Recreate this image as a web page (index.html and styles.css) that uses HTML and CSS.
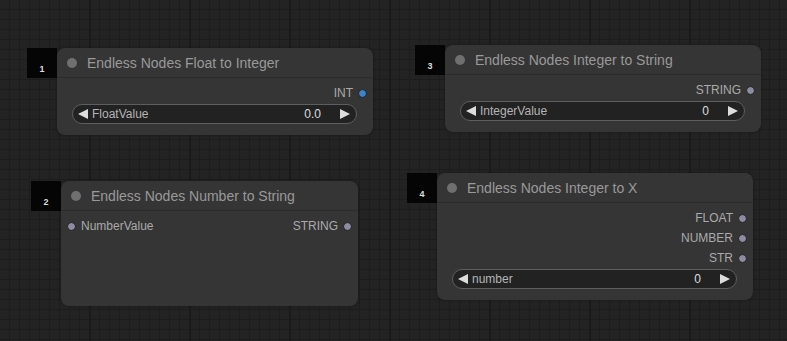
FILE: index.html
```html
<!DOCTYPE html>
<html lang="en">
  <head>
    <meta charset="UTF-8" />
    <meta name="viewport" content="width=device-width, initial-scale=1.0" />
    <title>Endless Nodes</title>
    <link rel="stylesheet" href="styles.css">
  </head>
  <body>
    <div class="canvas">

      <!-- Node 1 -->
      <div class="node node-1">
        <div class="badge">1</div>
        <div class="title"><span class="title-dot"></span>Endless Nodes Float to Integer</div>
        <div class="body">
          <div class="slot">
            <span class="out">INT <i class="dot dot-int"></i></span>
          </div>
          <div class="widget">
            <span class="arrow left"></span>
            <span class="w-label">FloatValue</span>
            <span class="w-value">0.0</span>
            <span class="arrow right"></span>
          </div>
        </div>
      </div>

      <!-- Node 3 -->
      <div class="node node-3">
        <div class="badge">3</div>
        <div class="title"><span class="title-dot"></span>Endless Nodes Integer to String</div>
        <div class="body">
          <div class="slot">
            <span class="out">STRING <i class="dot"></i></span>
          </div>
          <div class="widget">
            <span class="arrow left"></span>
            <span class="w-label">IntegerValue</span>
            <span class="w-value">0</span>
            <span class="arrow right"></span>
          </div>
        </div>
      </div>

      <!-- Node 2 -->
      <div class="node node-2">
        <div class="badge">2</div>
        <div class="title"><span class="title-dot"></span>Endless Nodes Number to String</div>
        <div class="body">
          <div class="slot">
            <span class="in"><i class="dot"></i> NumberValue</span>
            <span class="out">STRING <i class="dot"></i></span>
          </div>
        </div>
      </div>

      <!-- Node 4 -->
      <div class="node node-4">
        <div class="badge">4</div>
        <div class="title"><span class="title-dot"></span>Endless Nodes Integer to X</div>
        <div class="body">
          <div class="slot">
            <span class="out">FLOAT <i class="dot"></i></span>
          </div>
          <div class="slot">
            <span class="out">NUMBER <i class="dot"></i></span>
          </div>
          <div class="slot">
            <span class="out">STR <i class="dot"></i></span>
          </div>
          <div class="widget">
            <span class="arrow left"></span>
            <span class="w-label">number</span>
            <span class="w-value">0</span>
            <span class="arrow right"></span>
          </div>
        </div>
      </div>

    </div>
  </body>
</html>
```

FILE: styles.css
```css
body {
  margin: 0;
  padding: 0;
  font-family: "Liberation Sans", Arial, sans-serif;
  background-color: #222;
  overflow: hidden;
}

/* grid: thin lines every 10px, a heavier vertical one every 100px */
.canvas {
  position: relative;
  width: 787px;
  height: 341px;
  background-color: #232323;
  background-image:
    linear-gradient(to right, #1b1b1b 2px, transparent 2px),
    linear-gradient(to right, #1d1d1d 1px, transparent 1px),
    linear-gradient(to bottom, #1d1d1d 1px, transparent 1px);
  background-size: 100px 100px, 10px 10px, 10px 10px;
  background-position: 89px 0, 9px 0, 0 9px;
}

.node {
  position: absolute;
  width: 316px;
  background-color: #353535;
  border-radius: 8px;
  box-shadow: 0 0 3px rgba(0, 0, 0, 0.35);
}

.node-1 {
  left: 57px;
  top: 48px;
}

.node-3 {
  left: 445px;
  top: 45px;
}

.node-2 {
  left: 61px;
  top: 181px;
  width: 297px;
  height: 125px;
}

.node-4 {
  left: 437px;
  top: 173px;
}

.badge {
  position: absolute;
  left: -30px;
  top: 0;
  width: 30px;
  height: 30px;
  background-color: #050505;
  color: #ddd;
  font-size: 9px;
  font-weight: bold;
  text-align: center;
  line-height: 12px;
  padding-top: 15px;
  box-sizing: border-box;
}

.title {
  height: 29px;
  border-bottom: 1px solid #2c2c2c;
  display: flex;
  align-items: center;
  padding-left: 10px;
  color: #999;
  font-size: 14px;
}

.title-dot {
  width: 10px;
  height: 10px;
  border-radius: 50%;
  background-color: #6f6f6f;
  margin-right: 10px;
}

.body {
  padding: 5px 0 11px;
}

.slot {
  height: 20px;
  display: flex;
  align-items: center;
  justify-content: flex-end;
  font-size: 12px;
  color: #aaa;
}

.slot .in {
  display: flex;
  align-items: center;
  margin-right: auto;
  padding-left: 6px;
}

.slot .out {
  display: flex;
  align-items: center;
  padding-right: 6px;
}

.dot {
  display: inline-block;
  width: 7px;
  height: 7px;
  border-radius: 50%;
  background-color: #8e8ca3;
  border: 1px solid #1e1e1e;
}

.slot .in .dot {
  margin-right: 5px;
}

.slot .out .dot {
  margin-left: 5px;
}

.dot-int {
  background-color: #3d83c6;
}

.widget {
  height: 20px;
  margin: 1px 16px 0 15px;
  border: 1px solid #5e5e5e;
  border-radius: 10px;
  background-color: #222;
  box-sizing: border-box;
  display: flex;
  align-items: center;
  font-size: 12px;
  padding: 0 6px 0 5px;
}

.w-label {
  color: #b4b4b4;
  margin-left: 4px;
  flex: 1;
}

.w-value {
  color: #ddd;
  margin-right: 19px;
}

.arrow {
  width: 0;
  height: 0;
  border-top: 5px solid transparent;
  border-bottom: 5px solid transparent;
}

.arrow.left {
  border-right: 10px solid #ddd;
}

.arrow.right {
  border-left: 10px solid #ddd;
}
```
